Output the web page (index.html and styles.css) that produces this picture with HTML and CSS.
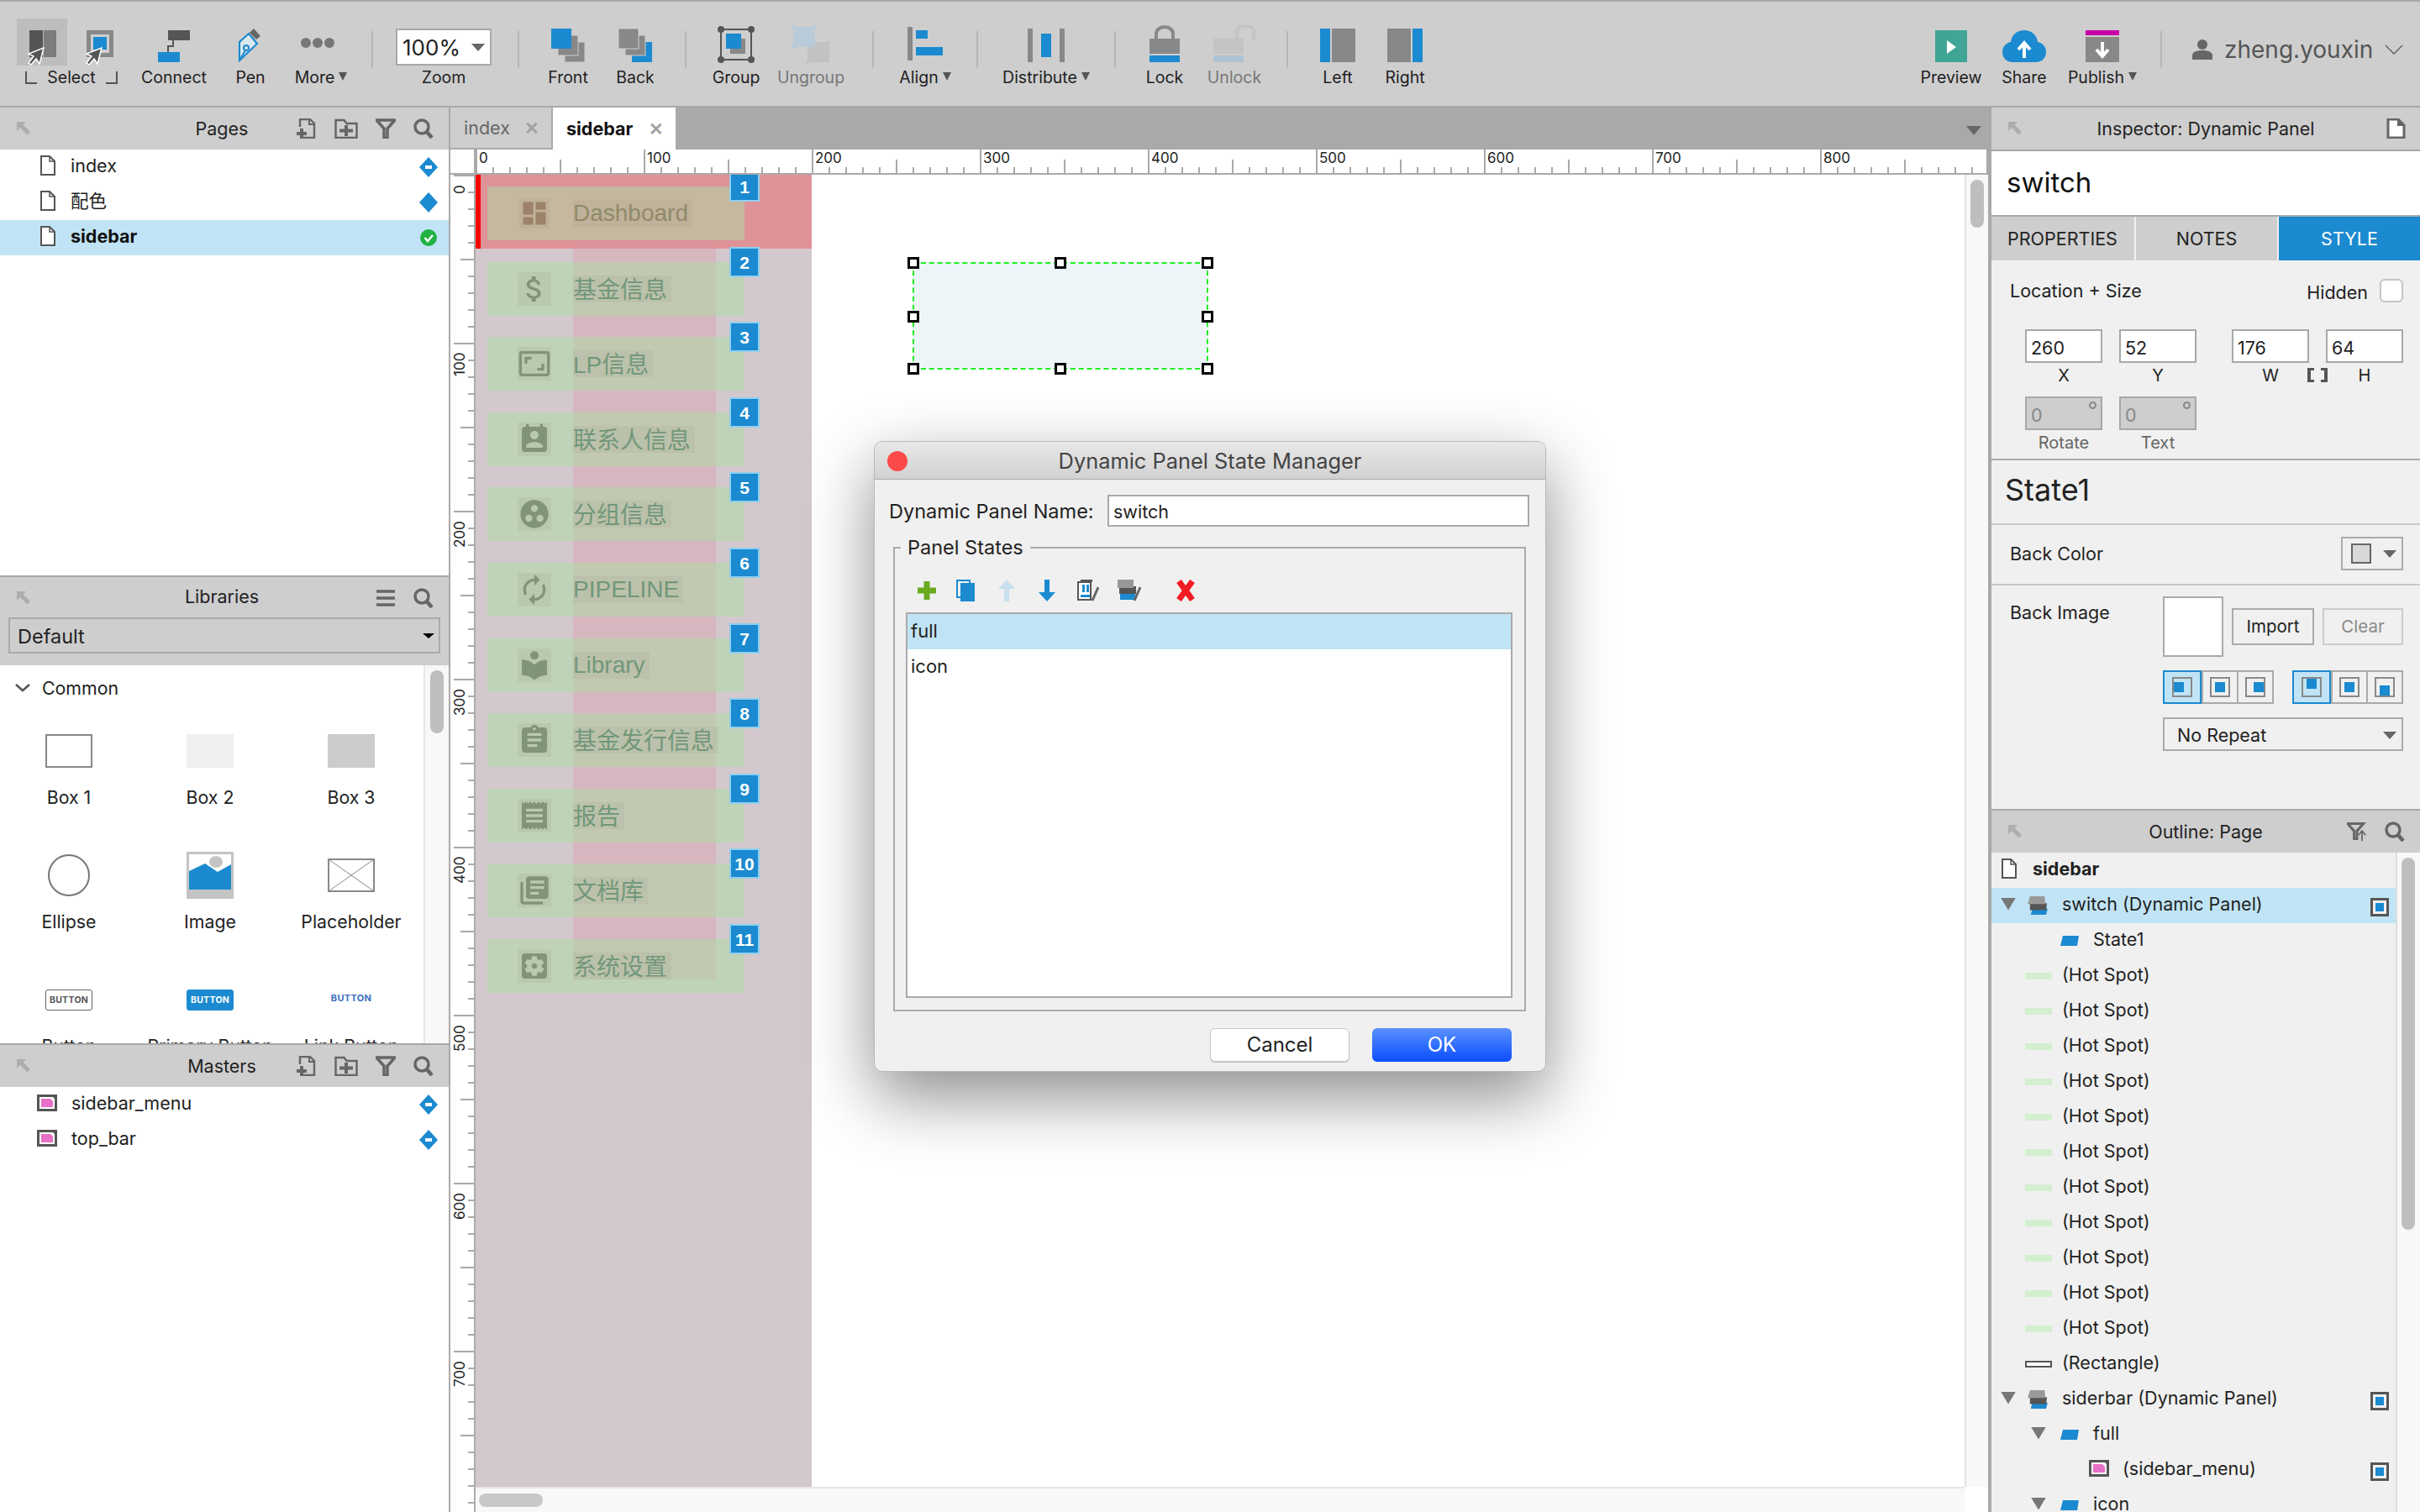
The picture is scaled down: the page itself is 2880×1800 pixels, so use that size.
FILE: index.html
```html
<!DOCTYPE html>
<html lang="en">
<head>
    <meta charset="UTF-8">
    <title>Axure - sidebar</title>
    <link rel="stylesheet" href="styles.css">
</head>
<body>

    <!-- shared icons -->
    <svg class="defs" width="0" height="0">
        <symbol id="i-collapse" viewBox="0 0 18 18"><path d="M1 1h11L8.500 4.500 17 13l-3.500 3.500L5 8 1 12z" fill="#adadad"/></symbol>
        <symbol id="i-newpage" viewBox="0 0 24 24"><path d="M4 10V1h12l5 5v17H8" fill="none" stroke="#666" stroke-width="2.400"/><path d="M15 1v6h6" fill="none" stroke="#666" stroke-width="2"/><path d="M0 18h12M6 12v12" stroke="#666" stroke-width="4"/></symbol>
        <symbol id="i-newfolder" viewBox="0 0 28 24"><path d="M1.500 23V2h10l3 4h12v17z" fill="none" stroke="#666" stroke-width="2.500"/><path d="M6 14.500h16M14 8v13" stroke="#666" stroke-width="4"/></symbol>
        <symbol id="i-filter" viewBox="0 0 24 24"><path d="M1 2h22l-9 10v11h-4V12z" fill="none" stroke="#666" stroke-width="3.500"/></symbol>
        <symbol id="i-search" viewBox="0 0 24 24"><circle cx="10" cy="10" r="8" fill="none" stroke="#666" stroke-width="3.500"/><path d="M15.500 15.500L22 23" stroke="#666" stroke-width="4.500"/></symbol>
        <symbol id="i-page" viewBox="0 0 18 24"><path d="M1 1h10l6 6v16H1z" fill="#fff" stroke="#555" stroke-width="2"/><path d="M11 1v6h6" fill="none" stroke="#555" stroke-width="1.500"/></symbol>
        <symbol id="i-master" viewBox="0 0 24 20"><rect x="1.500" y="1.500" width="21" height="17" fill="#fff" stroke="#555" stroke-width="3"/><path d="M5 5h11l3 3v7H5z" fill="#e86fc6"/><path d="M17 1h6v6z" fill="#555"/></symbol>
        <symbol id="i-dyn" viewBox="0 0 26 24"><path d="M6 16h20l-2 8H4z" fill="#1b8ad0"/><path d="M3 9h22l-1 9H3z" fill="#555"/><path d="M3 0h19l1 10H0z" fill="#999"/></symbol>
        <symbol id="i-state" viewBox="0 0 22 12"><path d="M3 0h19l-2 12H0z" fill="#1b8ad0"/></symbol>
        <symbol id="i-diamond" viewBox="0 0 22 24"><path d="M11 0l11 12-11 12L0 12z" fill="#1b8ad0"/></symbol>
        <symbol id="i-cursor" viewBox="0 0 22 22"><path d="M20 1l-5 19-4-6-6 7-3-2 6-8-6-3z" fill="#555" stroke="#fff" stroke-width="1.500"/></symbol>
    </svg>

    <!-- Top toolbar -->
    <header class="toolbar">
        <div class="tool">
            <div class="select-icons">
                <div class="select-on">
                    <svg class="ic-sel" viewBox="0 0 36 44"><rect x="3" y="0" width="16" height="32" fill="#555"/><rect x="20" y="0" width="15" height="32" fill="#7c7c7c"/><use href="#i-cursor" x="0" y="20" width="22" height="22"/></svg>
                </div>
                <div class="select-off">
                    <svg class="ic-sel" viewBox="0 0 36 44"><rect x="5.500" y="2.500" width="27" height="27" fill="#cecece" stroke="#888" stroke-width="5"/><rect x="11" y="8" width="16" height="15" fill="#1b8ad0"/><use href="#i-cursor" x="1" y="20" width="22" height="22"/></svg>
                </div>
            </div>
            <div class="select-label"><i class="brk-l"></i><span>Select</span><i class="brk-r"></i></div>
        </div>
        <div class="tool">
            <svg class="ic" width="40" height="46"><rect x="13" y="6" width="26" height="12" fill="#555"/><rect x="1" y="32" width="26" height="12" fill="#1b8ad0"/><path d="M19 18v7H13v7" fill="none" stroke="#555" stroke-width="2"/></svg>
            <span>Connect</span>
        </div>
        <div class="tool">
            <svg class="ic" width="30" height="46"><path d="M14 9l5-5 8 9-5 4z" fill="#666"/><path d="M2 42V20l11-10 10 12z" fill="#dde8ee" stroke="#1b8ad0" stroke-width="2.200"/><circle cx="10" cy="27" r="3" fill="none" stroke="#1b8ad0" stroke-width="2"/><path d="M2 42l7-12" stroke="#1b8ad0" stroke-width="2"/></svg>
            <span>Pen</span>
        </div>
        <div class="tool">
            <svg class="ic" width="48" height="46"><circle cx="6" cy="21" r="6" fill="#777"/><circle cx="20" cy="21" r="6" fill="#777"/><circle cx="34" cy="21" r="6" fill="#777"/></svg>
            <span>More<i class="drop"></i></span>
        </div>
        <i class="tsep"></i>
        <div class="tool">
            <div class="zoom-box"><span>100%</span><i class="caret"></i></div>
            <span>Zoom</span>
        </div>
        <i class="tsep"></i>
        <div class="tool">
            <svg class="ic" width="42" height="46"><rect x="17" y="20" width="24" height="24" fill="#888" stroke="#cecece"/><rect x="9" y="12" width="24" height="24" fill="#888" stroke="#cecece"/><rect x="1" y="4" width="24" height="24" fill="#1b8ad0"/></svg>
            <span>Front</span>
        </div>
        <div class="tool">
            <svg class="ic" width="42" height="46"><rect x="17" y="20" width="24" height="24" fill="#1b8ad0"/><rect x="9" y="12" width="24" height="24" fill="#888" stroke="#cecece"/><rect x="1" y="4" width="24" height="24" fill="#888" stroke="#cecece"/></svg>
            <span>Back</span>
        </div>
        <i class="tsep"></i>
        <div class="tool">
            <svg class="ic" width="46" height="46"><rect x="5" y="5" width="36" height="36" fill="none" stroke="#555" stroke-width="2"/><circle cx="5" cy="5" r="4" fill="#555"/><circle cx="41" cy="5" r="4" fill="#555"/><circle cx="5" cy="41" r="4" fill="#555"/><circle cx="41" cy="41" r="4" fill="#555"/><rect x="16" y="16" width="18" height="18" fill="#888"/><rect x="11" y="10" width="18" height="18" fill="#1b8ad0"/></svg>
            <span>Group</span>
        </div>
        <div class="tool dim">
            <svg class="ic" width="46" height="46"><rect x="19" y="20" width="26" height="24" fill="#c2c2c2"/><rect x="2" y="2" width="26" height="24" fill="#b9cbd8"/><circle cx="2" cy="2" r="2" fill="#b9cbd8"/><circle cx="28" cy="2" r="2" fill="#b9cbd8"/><circle cx="2" cy="26" r="2" fill="#b9cbd8"/><circle cx="45" cy="20" r="2" fill="#c2c2c2"/><circle cx="19" cy="44" r="2" fill="#c2c2c2"/></svg>
            <span>Ungroup</span>
        </div>
        <i class="tsep"></i>
        <div class="tool">
            <svg class="ic" width="42" height="46"><rect x="0" y="2" width="6" height="40" fill="#888"/><rect x="10" y="6" width="14" height="10" fill="#1b8ad0"/><rect x="10" y="26" width="32" height="10" fill="#1b8ad0"/></svg>
            <span>Align<i class="drop"></i></span>
        </div>
        <i class="tsep"></i>
        <div class="tool">
            <svg class="ic" width="44" height="46"><rect x="0" y="4" width="6" height="40" fill="#888"/><rect x="38" y="4" width="6" height="40" fill="#888"/><rect x="16" y="10" width="12" height="28" fill="#1b8ad0"/></svg>
            <span>Distribute<i class="drop"></i></span>
        </div>
        <i class="tsep"></i>
        <div class="tool">
            <svg class="ic" width="36" height="46"><path d="M8 17V10a10 8 0 0 1 20 0v7" fill="none" stroke="#888" stroke-width="4"/><rect x="0" y="16" width="36" height="18" fill="#888"/><rect x="0" y="36" width="36" height="8" fill="#1b8ad0"/></svg>
            <span>Lock</span>
        </div>
        <div class="tool dim">
            <svg class="ic" width="50" height="46"><path d="M28 17V8a9 7 0 0 1 20 0v10" fill="none" stroke="#c4c4c4" stroke-width="4"/><rect x="0" y="16" width="36" height="18" fill="#c4c4c4"/><rect x="0" y="36" width="36" height="8" fill="#aec4d4"/></svg>
            <span>Unlock</span>
        </div>
        <i class="tsep"></i>
        <div class="tool">
            <svg class="ic" width="42" height="46"><rect x="0" y="4" width="12" height="40" fill="#1b8ad0"/><rect x="14" y="4" width="28" height="40" fill="#888"/></svg>
            <span>Left</span>
        </div>
        <div class="tool">
            <svg class="ic" width="42" height="46"><rect x="0" y="4" width="28" height="40" fill="#888"/><rect x="30" y="4" width="12" height="40" fill="#1b8ad0"/></svg>
            <span>Right</span>
        </div>
        <div></div>
        <div class="tool">
            <svg class="ic" width="38" height="46"><rect x="0" y="6" width="38" height="38" fill="#40a595"/><path d="M14 18l11 8-11 8z" fill="#fff"/></svg>
            <span>Preview</span>
        </div>
        <div class="tool">
            <svg class="ic" width="52" height="46"><path d="M12 44C5 44 0 39 0 32c0-6 4-11 10-12C11 11 18 6 26 6s15 5 16 14c6 1 10 6 10 12 0 7-5 12-12 12z" fill="#1b8ad0"/><path d="M26 39V22M19 29l7-8 7 8" fill="none" stroke="#fff" stroke-width="4"/></svg>
            <span>Share</span>
        </div>
        <div class="tool">
            <svg class="ic" width="40" height="46"><rect x="0" y="6" width="40" height="6" fill="#c800a8"/><rect x="0" y="14" width="40" height="30" fill="#888"/><path d="M20 20v17M13 29l7 8 7-8" fill="none" stroke="#fff" stroke-width="4"/></svg>
            <span>Publish<i class="drop"></i></span>
        </div>
        <i class="tsep"></i>
        <div class="user">
            <svg width="24" height="24"><circle cx="12" cy="6" r="6" fill="#666"/><path d="M0 24v-5c0-4 5-6 12-6s12 2 12 6v5z" fill="#666"/></svg>
            <span>zheng.youxin</span>
            <svg width="22" height="12"><path d="M1 1l10 10L21 1" fill="none" stroke="#666" stroke-width="1.500"/></svg>
        </div>
    </header>

    <div class="main">

        <!-- Left column -->
        <aside class="left">
            <section class="pages">
                <div class="phead">
                    <svg class="collapse"><use href="#i-collapse"/></svg>
                    <span class="ptitle">Pages</span>
                    <div class="pactions">
                        <svg class="pa"><use href="#i-newpage"/></svg>
                        <svg class="pa wide"><use href="#i-newfolder"/></svg>
                        <svg class="pa"><use href="#i-filter"/></svg>
                        <svg class="pa"><use href="#i-search"/></svg>
                    </div>
                </div>
                <div class="plist">
                    <div class="prow"><svg class="pg"><use href="#i-page"/></svg><span>index</span><svg class="dia"><use href="#i-diamond"/><rect x="7" y="10" width="8" height="4" fill="#fff"/></svg></div>
                    <div class="prow"><svg class="pg"><use href="#i-page"/></svg><span class="zh-name">配色</span><svg class="dia"><use href="#i-diamond"/></svg></div>
                    <div class="prow on"><svg class="pg"><use href="#i-page"/></svg><span>sidebar</span><svg class="dia" viewBox="0 0 22 24"><circle cx="11" cy="12" r="10" fill="#1fb141"/><path d="M6.500 12l3.500 4 6-7" fill="none" stroke="#fff" stroke-width="2.500"/></svg></div>
                </div>
            </section>

            <section class="libs">
                <div class="phead">
                    <svg class="collapse"><use href="#i-collapse"/></svg>
                    <span class="ptitle">Libraries</span>
                    <div class="pactions">
                        <svg class="pa" viewBox="0 0 24 24"><path d="M1 4h22M1 12h22M1 20h22" stroke="#666" stroke-width="3.500"/></svg>
                        <svg class="pa"><use href="#i-search"/></svg>
                    </div>
                </div>
                <div class="lib-select"><span>Default</span><i class="caret dark"></i></div>
                <div class="lib-body">
                    <div class="lib-items">
                        <div class="lib-head">
                            <svg width="18" height="10"><path d="M1 1l8 7 8-7" fill="none" stroke="#555" stroke-width="2.500"/></svg>
                            <span>Common</span>
                        </div>
                        <div class="lib-grid">
                            <div class="widget"><div class="wicon"><i class="box1"></i></div><span>Box 1</span></div>
                            <div class="widget"><div class="wicon"><i class="box2"></i></div><span>Box 2</span></div>
                            <div class="widget"><div class="wicon"><i class="box3"></i></div><span>Box 3</span></div>
                            <div class="widget"><div class="wicon"><i class="ell"></i></div><span>Ellipse</span></div>
                            <div class="widget"><div class="wicon">
                                <svg width="56" height="56"><rect width="56" height="56" fill="#c4c4c4"/><rect x="3" y="3" width="50" height="42" fill="#fff"/><path d="M3 23l19-9 15 10 16-9v30H3z" fill="#1b8ad0"/><ellipse cx="35" cy="12" rx="8" ry="7" fill="#c4c4c4"/></svg>
                            </div><span>Image</span></div>
                            <div class="widget"><div class="wicon">
                                <svg width="56" height="40"><rect x="1" y="1" width="54" height="38" fill="#fff" stroke="#888" stroke-width="2"/><path d="M1 1l54 38M55 1L1 39" stroke="#888"/></svg>
                            </div><span>Placeholder</span></div>
                            <div class="widget"><div class="wicon"><b class="wbtn">BUTTON</b></div><span>Button</span></div>
                            <div class="widget"><div class="wicon"><b class="wbtn primary">BUTTON</b></div><span>Primary Button</span></div>
                            <div class="widget"><div class="wicon"><b class="wbtn link">BUTTON</b></div><span>Link Button</span></div>
                        </div>
                    </div>
                    <div class="lib-scroll"><i></i></div>
                </div>
            </section>

            <section class="masters">
                <div class="phead">
                    <svg class="collapse"><use href="#i-collapse"/></svg>
                    <span class="ptitle">Masters</span>
                    <div class="pactions">
                        <svg class="pa"><use href="#i-newpage"/></svg>
                        <svg class="pa wide"><use href="#i-newfolder"/></svg>
                        <svg class="pa"><use href="#i-filter"/></svg>
                        <svg class="pa"><use href="#i-search"/></svg>
                    </div>
                </div>
                <div class="plist">
                    <div class="prow"><svg class="mst"><use href="#i-master"/></svg><span>sidebar_menu</span><svg class="dia"><use href="#i-diamond"/><rect x="7" y="10" width="8" height="4" fill="#fff"/></svg></div>
                    <div class="prow"><svg class="mst"><use href="#i-master"/></svg><span>top_bar</span><svg class="dia"><use href="#i-diamond"/><rect x="7" y="10" width="8" height="4" fill="#fff"/></svg></div>
                </div>
            </section>
        </aside>

        <!-- Middle column -->
        <main class="center">
            <div class="tabs">
                <div class="tab">index<i>✕</i></div>
                <div class="tab on">sidebar<i>✕</i></div>
                <i class="tabs-menu"></i>
            </div>
            <div class="work">
                <div class="corner"></div>
                <div class="hruler">
                    <span>0</span><span>100</span><span>200</span><span>300</span><span>400</span>
                    <span>500</span><span>600</span><span>700</span><span>800</span>
                </div>
                <div class="vruler">
                    <span>0</span><span>100</span><span>200</span><span>300</span><span>400</span>
                    <span>500</span><span>600</span><span>700</span>
                </div>
                <div class="canvas">
                    <div class="nav">
                        <div class="nav-sel"></div>
                        <div class="nav-col"></div>
                        <div class="nav-row first">
                            <svg class="nic small" viewBox="0 0 24 24"><path d="M3 13h8V3H3v10zm0 8h8v-6H3v6zm10 0h8V11h-8v10zm0-18v6h8V3h-8z"/></svg>
                            <span class="ntx en">Dashboard</span><b class="badge">1</b>
                        </div>
                        <div class="nav-row">
                            <svg class="nic" viewBox="0 0 24 24"><path d="M11.800 10.900c-2.270-.590-3-1.200-3-2.150 0-1.090 1.010-1.850 2.700-1.850 1.780 0 2.440.850 2.500 2.100h2.210c-.070-1.720-1.120-3.300-3.210-3.810V3h-3v2.160c-1.940.420-3.500 1.680-3.500 3.610 0 2.310 1.910 3.460 4.700 4.130 2.500.600 3 1.480 3 2.410 0 .690-.490 1.790-2.700 1.790-2.060 0-2.870-.920-2.980-2.100h-2.200c.120 2.190 1.760 3.420 3.680 3.830V21h3v-2.150c1.950-.370 3.500-1.500 3.500-3.550 0-2.840-2.430-3.810-4.700-4.400z"/></svg>
                            <span class="ntx">基金信息</span><b class="badge">2</b>
                        </div>
                        <div class="nav-row">
                            <svg class="nic" viewBox="0 0 24 24"><path d="M19 12h-2v3h-3v2h5v-5zM7 9h3V7H5v5h2V9zm14-6H3c-1.100 0-2 .900-2 2v14c0 1.100.900 2 2 2h18c1.100 0 2-.900 2-2V5c0-1.100-.900-2-2-2zm0 16.010H3V4.990h18v14.020z"/></svg>
                            <span class="ntx">LP信息</span><b class="badge">3</b>
                        </div>
                        <div class="nav-row">
                            <svg class="nic" viewBox="0 0 24 24"><path d="M19 3h-1V1h-2v2H8V1H6v2H5c-1.110 0-2 .900-2 2v14c0 1.100.890 2 2 2h14c1.100 0 2-.900 2-2V5c0-1.100-.900-2-2-2zm-7 3c1.660 0 3 1.340 3 3s-1.340 3-3 3-3-1.340-3-3 1.340-3 3-3zm6 12H6v-1c0-2 4-3.100 6-3.100s6 1.100 6 3.100v1z"/></svg>
                            <span class="ntx">联系人信息</span><b class="badge">4</b>
                        </div>
                        <div class="nav-row">
                            <svg class="nic" viewBox="0 0 24 24"><path d="M12 2C6.480 2 2 6.480 2 12s4.480 10 10 10 10-4.480 10-10S17.520 2 12 2zM8 17.500c-1.380 0-2.500-1.120-2.500-2.500s1.120-2.500 2.500-2.500 2.500 1.120 2.500 2.500-1.120 2.500-2.500 2.500zM9.500 8c0-1.380 1.120-2.500 2.500-2.500s2.500 1.120 2.500 2.500-1.120 2.500-2.500 2.500S9.500 9.380 9.500 8zm6.500 9.500c-1.380 0-2.500-1.120-2.500-2.500s1.120-2.500 2.500-2.500 2.500 1.120 2.500 2.500-1.120 2.500-2.500 2.500z"/></svg>
                            <span class="ntx">分组信息</span><b class="badge">5</b>
                        </div>
                        <div class="nav-row">
                            <svg class="nic" viewBox="0 0 24 24"><path d="M12 6v3l4-4-4-4v3c-4.420 0-8 3.580-8 8 0 1.570.460 3.030 1.240 4.260L6.700 14.800c-.450-.830-.700-1.790-.700-2.800 0-3.310 2.690-6 6-6zm6.760 1.740L17.300 9.200c.440.840.700 1.790.700 2.800 0 3.310-2.690 6-6 6v-3l-4 4 4 4v-3c4.420 0 8-3.580 8-8 0-1.570-.460-3.030-1.240-4.260z"/></svg>
                            <span class="ntx en">PIPELINE</span><b class="badge">6</b>
                        </div>
                        <div class="nav-row">
                            <svg class="nic" viewBox="0 0 24 24"><path d="M12 11.550C9.640 9.350 6.480 8 3 8v11c3.480 0 6.640 1.350 9 3.550 2.360-2.190 5.520-3.550 9-3.550V8c-3.480 0-6.640 1.350-9 3.550zM12 8c1.660 0 3-1.340 3-3s-1.340-3-3-3-3 1.340-3 3 1.340 3 3 3z"/></svg>
                            <span class="ntx en">Library</span><b class="badge">7</b>
                        </div>
                        <div class="nav-row">
                            <svg class="nic" viewBox="0 0 24 24"><path d="M19 3h-4.180C14.400 1.840 13.300 1 12 1c-1.300 0-2.400.840-2.820 2H5c-1.100 0-2 .900-2 2v14c0 1.100.900 2 2 2h14c1.100 0 2-.900 2-2V5c0-1.100-.900-2-2-2zm-7 0c.550 0 1 .450 1 1s-.450 1-1 1-1-.450-1-1 .450-1 1-1zm2 14H7v-2h7v2zm3-4H7v-2h10v2zm0-4H7V7h10v2z"/></svg>
                            <span class="ntx">基金发行信息</span><b class="badge">8</b>
                        </div>
                        <div class="nav-row">
                            <svg class="nic" viewBox="0 0 24 24"><path d="M18 17H6v-2h12v2zm0-4H6v-2h12v2zm0-4H6V7h12v2zM3 22l1.500-1.500L6 22l1.500-1.500L9 22l1.500-1.500L12 22l1.500-1.500L15 22l1.500-1.500L18 22l1.500-1.500L21 22V2l-1.500 1.500L18 2l-1.500 1.500L15 2l-1.500 1.500L12 2l-1.500 1.500L9 2 7.500 3.500 6 2 4.500 3.500 3 2v20z"/></svg>
                            <span class="ntx">报告</span><b class="badge">9</b>
                        </div>
                        <div class="nav-row">
                            <svg class="nic" viewBox="0 0 24 24"><path d="M4 6H2v14c0 1.100.900 2 2 2h14v-2H4V6zm16-4H8c-1.100 0-2 .900-2 2v12c0 1.100.900 2 2 2h12c1.100 0 2-.900 2-2V4c0-1.100-.900-2-2-2zm-1 9H9V9h10v2zm-4 4H9v-2h6v2zm4-8H9V5h10v2z"/></svg>
                            <span class="ntx">文档库</span><b class="badge">10</b>
                        </div>
                        <div class="nav-row">
                            <svg class="nic" viewBox="0 0 24 24"><path d="M12 10c-1.100 0-2 .900-2 2s.900 2 2 2 2-.900 2-2-.900-2-2-2zm7-7H5c-1.110 0-2 .900-2 2v14c0 1.100.890 2 2 2h14c1.110 0 2-.900 2-2V5c0-1.100-.890-2-2-2zm-1.750 9c0 .230-.020.460-.050.680l1.480 1.160c.130.110.170.300.080.450l-1.400 2.420c-.090.150-.270.210-.430.150l-1.740-.700c-.360.280-.760.510-1.180.690l-.260 1.850c-.030.170-.180.300-.350.300h-2.800c-.170 0-.320-.130-.350-.290l-.260-1.850c-.430-.180-.820-.410-1.180-.690l-1.740.700c-.160.060-.340 0-.430-.150l-1.400-2.420c-.090-.150-.050-.340.080-.450l1.480-1.160c-.030-.230-.050-.460-.050-.690 0-.230.020-.460.050-.680l-1.480-1.160c-.130-.110-.170-.300-.080-.450l1.400-2.420c.090-.150.270-.210.430-.150l1.740.700c.360-.280.760-.510 1.180-.690l.260-1.850c.030-.170.180-.300.350-.300h2.800c.170 0 .320.130.350.290l.260 1.850c.430.180.820.410 1.180.690l1.740-.700c.160-.060.340 0 .430.150l1.400 2.420c.090.150.050.340-.080.450l-1.480 1.160c.030.230.050.460.050.690z"/></svg>
                            <span class="ntx">系统设置</span><b class="badge">11</b>
                        </div>
                    </div>

                    <div class="panel-sel">
                        <i class="hd tl"></i><i class="hd tc"></i><i class="hd tr"></i>
                        <i class="hd ml"></i><i class="hd mr"></i>
                        <i class="hd bl"></i><i class="hd bc"></i><i class="hd br"></i>
                    </div>
                </div>
                <div class="vscroll"><i></i></div>
                <div class="hscroll"><i></i></div>
                <div class="scroll-corner"></div>
            </div>
        </main>

        <!-- Right column -->
        <aside class="right">
            <div class="phead ins-head">
                <svg class="collapse"><use href="#i-collapse"/></svg>
                <span class="ptitle">Inspector: Dynamic Panel</span>
                <div class="pactions">
                    <svg class="pa" viewBox="0 0 24 24"><path d="M3 1h12l7 7v15H3z" fill="#fff" stroke="#666" stroke-width="3"/><path d="M14 1v8h8z" fill="#666"/></svg>
                </div>
            </div>
            <div class="ins-name">switch</div>
            <div class="ins-tabs">
                <div class="itab">PROPERTIES</div>
                <div class="itab">NOTES</div>
                <div class="itab on">STYLE</div>
            </div>

            <section class="loc">
                <div class="loc-head">
                    <span>Location + Size</span>
                    <label class="hidden-opt">Hidden<i class="check"></i></label>
                </div>
                <div class="loc-grid">
                    <div class="fld"><div class="num">260</div><span>X</span></div>
                    <div class="fld"><div class="num">52</div><span>Y</span></div>
                    <div class="fld"><div class="num">176</div><span>W</span><i class="ratio"></i></div>
                    <div class="fld"><div class="num">64</div><span>H</span></div>
                    <div class="fld off"><div class="num">0<i class="deg"></i></div><span>Rotate</span></div>
                    <div class="fld off"><div class="num">0<i class="deg"></i></div><span>Text</span></div>
                </div>
            </section>

            <section class="state-name">State1</section>

            <section class="back-color">
                <span>Back Color</span>
                <div class="swatch-btn"><i class="swatch"></i><i class="caret"></i></div>
            </section>

            <section class="back-image">
                <span class="bi-label">Back Image</span>
                <div class="bi-ctrls">
                    <div class="bi-top">
                        <div class="bi-thumb"></div>
                        <div class="bi-btn">Import</div>
                        <div class="bi-btn off">Clear</div>
                    </div>
                    <div class="bi-aligns">
                        <div class="al-group">
                            <div class="al on"><div class="al-box ml"><i></i></div></div>
                            <div class="al"><div class="al-box"><i></i></div></div>
                            <div class="al"><div class="al-box mr"><i></i></div></div>
                        </div>
                        <div class="al-group">
                            <div class="al on"><div class="al-box mt"><i></i></div></div>
                            <div class="al"><div class="al-box"><i></i></div></div>
                            <div class="al"><div class="al-box mb"><i></i></div></div>
                        </div>
                    </div>
                    <div class="bi-select"><span>No Repeat</span><i class="caret"></i></div>
                </div>
            </section>

            <section class="outline">
                <div class="phead">
                    <svg class="collapse"><use href="#i-collapse"/></svg>
                    <span class="ptitle">Outline: Page</span>
                    <div class="pactions">
                        <svg class="pa filterup" viewBox="0 0 28 26"><path d="M1 2h22l-9 10v11h-4V12z" fill="none" stroke="#666" stroke-width="3.500"/><path d="M21 26V13M16 18l5-6 5 6" fill="none" stroke="#666" stroke-width="2"/></svg>
                        <svg class="pa"><use href="#i-search"/></svg>
                    </div>
                </div>
                <div class="o-body">
                    <div class="o-list">
                        <div class="o-row o-page"><svg class="pg"><use href="#i-page"/></svg><b>sidebar</b></div>
                        <div class="o-row o-top on"><i class="tri"></i><svg class="dyn"><use href="#i-dyn"/></svg><span>switch (Dynamic Panel)</span><i class="flag"></i></div>
                        <div class="o-row o-state"><svg class="st"><use href="#i-state"/></svg><span>State1</span></div>
                        <div class="o-row o-leaf"><i class="hot"></i><span>(Hot Spot)</span></div>
                        <div class="o-row o-leaf"><i class="hot"></i><span>(Hot Spot)</span></div>
                        <div class="o-row o-leaf"><i class="hot"></i><span>(Hot Spot)</span></div>
                        <div class="o-row o-leaf"><i class="hot"></i><span>(Hot Spot)</span></div>
                        <div class="o-row o-leaf"><i class="hot"></i><span>(Hot Spot)</span></div>
                        <div class="o-row o-leaf"><i class="hot"></i><span>(Hot Spot)</span></div>
                        <div class="o-row o-leaf"><i class="hot"></i><span>(Hot Spot)</span></div>
                        <div class="o-row o-leaf"><i class="hot"></i><span>(Hot Spot)</span></div>
                        <div class="o-row o-leaf"><i class="hot"></i><span>(Hot Spot)</span></div>
                        <div class="o-row o-leaf"><i class="hot"></i><span>(Hot Spot)</span></div>
                        <div class="o-row o-leaf"><i class="hot"></i><span>(Hot Spot)</span></div>
                        <div class="o-row o-leaf"><i class="rect"></i><span>(Rectangle)</span></div>
                        <div class="o-row o-top"><i class="tri"></i><svg class="dyn"><use href="#i-dyn"/></svg><span>siderbar (Dynamic Panel)</span><i class="flag"></i></div>
                        <div class="o-row o-sub"><i class="tri"></i><svg class="st"><use href="#i-state"/></svg><span>full</span></div>
                        <div class="o-row o-deep"><svg class="mst"><use href="#i-master"/></svg><span>(sidebar_menu)</span><i class="flag"></i></div>
                        <div class="o-row o-sub"><i class="tri"></i><svg class="st"><use href="#i-state"/></svg><span>icon</span></div>
                    </div>
                    <div class="o-scroll"><i></i></div>
                </div>
            </section>
        </aside>
    </div>

    <!-- Modal -->
    <div class="dialog">
        <div class="dlg-title"><i class="dlg-close"></i>Dynamic Panel State Manager</div>
        <div class="dlg-name">
            <span>Dynamic Panel Name:</span>
            <div class="dlg-input">switch</div>
        </div>
        <fieldset class="dlg-states">
            <legend>Panel States</legend>
            <div class="dlg-tools">
                <svg width="22" height="26"><path d="M11 2v22M0 13h22" stroke="#6aab1f" stroke-width="7"/></svg>
                <svg width="22" height="26"><rect x="1" y="1" width="15" height="20" fill="#f0f0f0" stroke="#1b8ad0" stroke-width="2"/><rect x="5" y="4" width="17" height="22" fill="#1b8ad0"/></svg>
                <svg class="t-up" width="20" height="26"><path d="M10 0l10 11h-7v15H7V11H0z" fill="#c8dfee"/></svg>
                <svg class="t-down" width="20" height="26"><path d="M10 26L0 15h7V0h6v15h7z" fill="#1b8ad0"/></svg>
                <svg class="t-edit" width="26" height="26"><path d="M1 3h15v21H1z" fill="#fff" stroke="#555" stroke-width="2"/><path d="M4 0h14v3H4z" fill="#555"/><rect x="6" y="6" width="3" height="9" fill="#1b8ad0"/><rect x="11" y="6" width="3" height="9" fill="#1b8ad0"/><rect x="4" y="18" width="11" height="3" fill="#1b8ad0"/><path d="M25 9l-7 16" stroke="#666" stroke-width="3"/></svg>
                <svg class="t-edit2" width="28" height="26"><rect x="3" y="15" width="18" height="9" fill="#1b8ad0"/><rect x="2" y="8" width="20" height="9" fill="#555"/><rect x="0" y="0" width="19" height="10" fill="#999"/><path d="M27 9l-7 16" stroke="#666" stroke-width="3"/></svg>
                <svg class="t-del" width="22" height="26"><path d="M3 2l16 22M19 2L3 24" stroke="#f31c24" stroke-width="7"/></svg>
            </div>
            <div class="dlg-list">
                <div class="dlg-item on">full</div>
                <div class="dlg-item">icon</div>
            </div>
        </fieldset>
        <div class="dlg-btns">
            <div class="btn-cancel">Cancel</div>
            <div class="btn-ok">OK</div>
        </div>
    </div>

</body>
</html>
```

FILE: styles.css
```css
* {
    box-sizing: border-box;
}
html, body {
    margin: 0;
    height: 100%;
}
body {
    width: 2880px;
    height: 1800px;
    overflow: hidden;
    display: flex;
    flex-direction: column;
    position: relative;
    background: #fff;
    color: #222;
    font-family: Inter, "Noto Sans CJK SC", sans-serif;
    font-size: 21.500px;
}
i {
    font-style: normal;
}
.defs {
    position: absolute;
}

/* ---------- toolbar ---------- */
.toolbar {
    height: 126px;
    flex: none;
    border-top: 2px solid #a8a8a8;
    background: #cecece;
    padding: 28px 0 0 20px;
    display: grid;
    grid-template-columns: 125px 124px 58px 110px 12px 158px 20px 98px 62px 58px 62px 116px 32px 92px 32px 132px 32px 86px 80px 46px 74px 86px 1fr 84px 90px 96px 44px 286px;
    align-items: start;
    font-size: 19.500px;
}
.tool {
    display: flex;
    flex-direction: column;
    align-items: center;
    white-space: nowrap;
}
.tool > span, .select-label {
    height: 24px;
    line-height: 24px;
    margin-top: 4px;
}
.tool.dim > span {
    color: #777;
}
.ic {
    display: block;
}
.tsep {
    justify-self: center;
    width: 2px;
    height: 44px;
    margin-top: 7px;
    background: #b6b6b6;
}
.drop {
    display: inline-block;
    margin-left: 5px;
    vertical-align: 3px;
    border-left: 5px solid transparent;
    border-right: 5px solid transparent;
    border-top: 10px solid #555;
}
.caret {
    border-left: 8px solid transparent;
    border-right: 8px solid transparent;
    border-top: 9px solid #666;
}
.caret.dark {
    border-top-color: #000;
    border-left-width: 7px;
    border-right-width: 7px;
    border-top-width: 6px;
}

.select-icons {
    display: flex;
    align-self: flex-start;
    margin-top: -8px;
    height: 54px;
}
.select-on, .select-off {
    width: 60px;
    height: 56px;
    padding: 14px 0 0 12px;
}
.select-on {
    background: #bdbdbd;
}
.select-off {
    padding-left: 20px;
}
.ic-sel {
    display: block;
    width: 36px;
    height: 44px;
}
.select-label {
    display: flex;
    align-items: center;
    align-self: flex-start;
    width: 120px;
    justify-content: space-between;
    padding-left: 10px;
}
.brk-l, .brk-r {
    width: 14px;
    height: 15px;
    border-bottom: 2px solid #555;
}
.brk-l {
    border-left: 2px solid #555;
}
.brk-r {
    border-right: 2px solid #555;
}
.zoom-box {
    width: 114px;
    height: 44px;
    margin: 4px 0 -2px;
    background: #fff;
    border: 2px solid #a8a8a8;
    display: flex;
    align-items: center;
    justify-content: space-between;
    padding: 0 6px 0 6px;
    font-size: 26px;
    color: #222;
}
.user {
    display: flex;
    align-items: center;
    gap: 14px;
    padding: 12px 0 0 15px;
    font-size: 28px;
    color: #555;
    white-space: nowrap;
}

/* ---------- columns ---------- */
.main {
    flex: 1;
    display: flex;
    min-height: 0;
}
.left {
    width: 536px;
    flex: none;
    display: flex;
    flex-direction: column;
    border-right: 2px solid #aaa;
}
.center {
    flex: 1;
    min-width: 0;
    display: flex;
    flex-direction: column;
}
.right {
    width: 512px;
    flex: none;
    display: flex;
    flex-direction: column;
    border-left: 2px solid #a8a8a8;
    background: #f0f0f0;
}

/* ---------- panel header ---------- */
.phead {
    height: 52px;
    flex: none;
    position: relative;
    background: #cecece;
    border-top: 2px solid #a8a8a8;
    display: flex;
    align-items: center;
    justify-content: center;
    font-size: 21.500px;
}
.left .phead {
    padding-right: 6px;
}
.ptitle {
    color: #222;
}
.collapse {
    position: absolute;
    left: 19px;
    top: 16px;
    width: 18px;
    height: 18px;
}
.pactions {
    position: absolute;
    right: 18px;
    top: 13px;
    display: flex;
    gap: 21px;
}
.pa {
    width: 24px;
    height: 24px;
    display: block;
}
.pa.wide {
    width: 28px;
}

/* ---------- pages ---------- */
.pages {
    height: 559px;
    flex: none;
}
.plist {
    background: #fff;
}
.prow {
    height: 42px;
    display: flex;
    align-items: center;
    padding: 0 0 4px 48px;
}
.prow.on {
    background: #c0e4f5;
    font-weight: 700;
    color: #111;
}
.zh-name {
    margin-top: -3px;
}
.pg {
    width: 18px;
    height: 24px;
    flex: none;
    margin-right: 18px;
}
.mst {
    width: 24px;
    height: 20px;
    flex: none;
    margin: 0 17px 0 -4px;
}
.dia {
    width: 22px;
    height: 24px;
    margin: 4px 13px 0 auto;
}

/* ---------- libraries ---------- */
.libs {
    height: 557px;
    flex: none;
    display: flex;
    flex-direction: column;
    overflow: hidden;
}
.libs .phead {
    height: 50px;
    padding-bottom: 2px;
}
.lib-select {
    height: 57px;
    flex: none;
    background: #cecece;
    padding: 0 10px 13px;
    display: flex;
    position: relative;
    align-items: center;
    justify-content: space-between;
    font-size: 23.500px;
}
.lib-select span {
    border: 2px solid #aaa;
    position: absolute;
    left: 10px;
    right: 10px;
    top: 0;
    height: 43px;
    line-height: 42px;
    padding-left: 9px;
}
.lib-select .caret {
    position: absolute;
    right: 17px;
    top: 19px;
}
.lib-body {
    flex: 1;
    display: flex;
    min-height: 0;
    background: #fff;
}
.lib-items {
    flex: 1;
    overflow: hidden;
}
.lib-head {
    height: 54px;
    display: flex;
    align-items: center;
    padding-left: 18px;
    gap: 14px;
    font-size: 21.300px;
    margin-bottom: 18px;
}
.lib-grid {
    display: grid;
    grid-template-columns: repeat(3, 168px);
    margin-left: -2px;
}
.widget {
    height: 148px;
    display: flex;
    flex-direction: column;
    align-items: center;
    font-size: 21.300px;
    white-space: nowrap;
}
.wicon {
    height: 60px;
    margin-bottom: 12px;
    display: flex;
    align-items: center;
    justify-content: center;
}
.box1, .box2, .box3 {
    width: 56px;
    height: 40px;
}
.box1 {
    background: #fff;
    border: 2px solid #888;
}
.box2 {
    background: #f0f0f0;
}
.box3 {
    background: #cccccc;
}
.ell {
    width: 50px;
    height: 50px;
    border: 2px solid #777;
    border-radius: 50%;
}
.wbtn {
    width: 56px;
    height: 25px;
    line-height: 23px;
    text-align: center;
    font-size: 10.500px;
    letter-spacing: .3px;
    color: #555;
    border: 1px solid #666;
    border-radius: 3px;
}
.wbtn.primary {
    background: #1b8ad0;
    border-color: #1b8ad0;
    color: #fff;
}
.wbtn.link {
    border: none;
    color: #3a70c0;
    line-height: 21px;
    font-size: 11px;
}
.lib-scroll {
    width: 30px;
    flex: none;
    background: #f8f8f8;
    border-left: 2px solid #e6e6e6;
    padding: 6px 6px 0 6px;
}
.lib-scroll i, .o-scroll i, .vscroll i {
    display: block;
    width: 16px;
    height: 75px;
    border-radius: 8px;
    background: #bebebe;
}
.masters {
    flex: 1;
    background: #fff;
}

/* ---------- tabs + work area ---------- */
.tabs {
    height: 52px;
    flex: none;
    background: #a9a9a9;
    display: flex;
    position: relative;
    padding-top: 2px;
}
.tab {
    width: 122px;
    height: 50px;
    background: #cecece;
    border-right: 2px solid #aaa;
    border-bottom: 2px solid #aaa;
    display: flex;
    align-items: center;
    justify-content: space-between;
    padding: 0 14px 0 16px;
    color: #666;
}
.tab i {
    color: #a2a2a2;
    font-size: 21px;
    font-weight: 700;
}
.tab.on {
    width: 146px;
    background: #fff;
    border: none;
    height: 50px;
    color: #111;
    font-weight: 700;
}
.tabs-menu {
    position: absolute;
    right: 10px;
    top: 24px;
    border-left: 9px solid transparent;
    border-right: 9px solid transparent;
    border-top: 11px solid #666;
}
.work {
    flex: 1;
    min-height: 0;
    display: grid;
    grid-template-columns: 30px 1fr 30px;
    grid-template-rows: 30px 1fr 30px;
    background: #fff;
}
.corner {
    border-bottom: 2px solid #aaa;
    border-right: 2px solid #aaa;
}
.hruler {
    grid-column: 2 / 4;
    display: flex;
    overflow: hidden;
    border-bottom: 2px solid #aaa;
    border-right: 4px solid #aaa;
    background-image:
        linear-gradient(to right, #aaa 2px, transparent 2px),
        linear-gradient(to right, #aaa 2px, transparent 2px),
        linear-gradient(to right, #aaa 2px, transparent 2px);
    background-size: 200px 28px, 100px 16px, 20px 7px;
    background-position: left bottom;
    background-repeat: repeat-x;
    font-size: 17px;
}
.hruler span {
    flex: 0 0 200px;
    padding-left: 4px;
    line-height: 20px;
}
.vruler {
    grid-row: 2 / 4;
    display: flex;
    flex-direction: column;
    overflow: hidden;
    border-right: 2px solid #aaa;
    background-image:
        linear-gradient(to bottom, #aaa 2px, transparent 2px),
        linear-gradient(to bottom, #aaa 2px, transparent 2px),
        linear-gradient(to bottom, #aaa 2px, transparent 2px);
    background-size: 24px 200px, 16px 100px, 7px 20px;
    background-position: right top;
    background-repeat: repeat-y;
    font-size: 17px;
}
.vruler span {
    flex: 0 0 200px;
    writing-mode: vertical-rl;
    transform: rotate(180deg);
    line-height: 20px;
    margin-left: 1px;
    width: 20px;
    height: 200px;
    padding-bottom: 12px;
    text-align: right;
}
.canvas {
    position: relative;
    overflow: hidden;
    background: #fff;
}
.vscroll {
    background: #f8f8f8;
    border-left: 2px solid #e2e2e2;
    border-right: 2px solid #aaa;
    padding: 6px 0 0 5px;
}
.vscroll i {
    height: 57px;
}
.hscroll {
    background: #f8f8f8;
    border-top: 2px solid #e6e6e6;
    padding: 6px 0 0 4px;
}
.hscroll i {
    display: block;
    width: 76px;
    height: 16px;
    border-radius: 8px;
    background: #c8c8c8;
}
.scroll-corner {
    background: #fff;
    border-right: 2px solid #aaa;
}

/* ---------- design on the canvas ---------- */
.nav {
    position: absolute;
    left: 0;
    top: 0;
    bottom: 0;
    width: 400px;
    background: #d3c8cd;
    padding: 14px 0 0 14px;
    display: flex;
    flex-direction: column;
    gap: 25.600px;
}
.nav-sel {
    position: absolute;
    left: 0;
    top: 0;
    width: 400px;
    height: 88px;
    background: #df9298;
    border-left: 6px solid #f00;
}
.nav-col {
    position: absolute;
    left: 116px;
    top: 30px;
    width: 170px;
    height: 928px;
    background: rgba(221, 147, 158, 0.3);
}
.nav-row {
    position: relative;
    width: 306px;
    height: 64px;
    flex: none;
    display: flex;
    align-items: center;
    padding-left: 36px;
    background: rgba(171, 222, 163, 0.5);
    color: #71977a;
    fill: #80947a;
    font-family: "Liberation Sans", "Noto Sans CJK SC", sans-serif;
    font-size: 28px;
}
.nav-row.first {
    color: #8f8b68;
    fill: #9c8268;
}
.nic {
    width: 40px;
    height: 40px;
    flex: none;
    margin-right: 26px;
    background: rgba(150, 130, 120, 0.12);
}
.nic.small {
    width: 36px;
    height: 36px;
    margin: 0 28px 0 2px;
}
.ntx {
    height: 32px;
    line-height: 35px;
    white-space: nowrap;
    background: rgba(150, 130, 120, 0.12);
    padding-right: 5px;
}
.ntx.en {
    line-height: 32px;
}
.badge {
    position: absolute;
    left: 288px;
    top: -18px;
    width: 36px;
    height: 36px;
    line-height: 33px;
    text-align: center;
    background: #1b8ad0;
    border: 2px solid #8fd0f0;
    color: #fff;
    font-size: 21px;
}
.panel-sel {
    position: absolute;
    left: 520px;
    top: 104px;
    width: 352px;
    height: 128px;
    background: #edf5f9;
    border: 2px dashed #1ef01e;
}
.hd {
    position: absolute;
    width: 14px;
    height: 14px;
    background: #fff;
    border: 3px solid #000;
}
.tl, .ml, .bl { left: -8px; }
.tc, .bc { left: 167px; }
.tr, .mr, .br { right: -8px; }
.tl, .tc, .tr { top: -8px; }
.ml, .mr { top: 56px; }
.bl, .bc, .br { bottom: -8px; }

/* ---------- inspector ---------- */
.ins-head {
    height: 54px;
    border-bottom: 2px solid #a8a8a8;
}
.ins-head .pactions {
    right: 17px;
}
.ins-name {
    height: 78px;
    flex: none;
    background: #fff;
    border-bottom: 2px solid #aaa;
    padding-left: 18px;
    line-height: 74px;
    font-size: 33px;
    color: #111;
}
.ins-tabs {
    display: flex;
    gap: 2px;
    height: 52px;
    flex: none;
    background: #f0f0f0;
}
.itab {
    flex: 1;
    background: #cecece;
    display: flex;
    align-items: center;
    justify-content: center;
}
.itab:first-child {
    flex: 0 0 170px;
    justify-content: flex-start;
    padding-left: 19px;
}
.itab.on {
    background: #1b8ad0;
    color: #fff;
}
.loc {
    height: 238px;
    flex: none;
    border-bottom: 2px solid #aaa;
    padding: 22px 20px 0 22px;
}
.loc-head {
    display: flex;
    justify-content: space-between;
    align-items: center;
    height: 28px;
    margin-bottom: 32px;
}
.hidden-opt {
    display: flex;
    align-items: center;
    gap: 14px;
    margin-top: 3px;
}
.check {
    width: 28px;
    height: 28px;
    margin-top: -4px;
    background: #fff;
    border: 2px solid #c4c4c4;
    border-radius: 6px;
}
.loc-grid {
    display: grid;
    grid-template-columns: 92px 92px 114px 92px;
    column-gap: 20px;
    row-gap: 10px;
    padding-left: 18px;
}
.fld {
    position: relative;
    text-align: center;
    font-size: 20px;
}
.fld:nth-child(3) {
    margin-left: 22px;
}
.fld span {
    display: block;
    height: 30px;
    line-height: 30px;
}
.num {
    height: 40px;
    background: #fff;
    border: 2px solid #a8a8a8;
    text-align: left;
    padding-left: 5px;
    line-height: 40px;
    font-size: 21.500px;
    position: relative;
}
.fld.off span {
    color: #666;
}
.fld.off .num {
    background: #cecece;
    color: #888;
}
.deg {
    position: absolute;
    right: 5px;
    top: 4px;
    width: 9px;
    height: 9px;
    border: 2px solid #888;
    border-radius: 50%;
}
.ratio {
    position: absolute;
    left: 90px;
    top: 46px;
    width: 24px;
    height: 17px;
    border: 4px solid #555;
    border-top-width: 3px;
    border-bottom-width: 3px;
    clip-path: polygon(0 0, 8px 0, 8px 100%, 0 100%, 0 0, 100% 0, 100% 100%, 16px 100%, 16px 0);
}
.state-name {
    height: 77px;
    flex: none;
    border-bottom: 2px solid #c8c8c8;
    padding-left: 16px;
    line-height: 70px;
    font-size: 36px;
}
.back-color {
    height: 72px;
    flex: none;
    border-bottom: 2px solid #c8c8c8;
    padding: 0 20px 2px 22px;
    display: flex;
    align-items: center;
    justify-content: space-between;
}
.swatch-btn {
    width: 74px;
    height: 40px;
    border: 2px solid #aaa;
    display: flex;
    align-items: center;
    justify-content: space-between;
    padding: 0 6px 0 10px;
}
.swatch {
    width: 24px;
    height: 24px;
    border: 2px solid #666;
    background: #d8d8d8;
}
.back-image {
    height: 266px;
    flex: none;
    padding: 13px 20px 0 22px;
    display: flex;
}
.bi-label {
    width: 182px;
    flex: none;
    line-height: 30px;
    margin-top: 4px;
}
.bi-ctrls {
    flex: 1;
}
.bi-top {
    display: flex;
    gap: 10px;
    align-items: center;
    margin-bottom: 16px;
}
.bi-thumb {
    width: 72px;
    height: 72px;
    background: #fff;
    border: 2px solid #aaa;
}
.bi-btn {
    width: 98px;
    height: 44px;
    border: 2px solid #aaa;
    text-align: center;
    line-height: 40px;
    font-size: 20.500px;
}
.bi-btn.off {
    width: 96px;
    border-color: #ccc;
    color: #888;
}
.bi-aligns {
    display: flex;
    justify-content: space-between;
    margin-bottom: 16px;
}
.al-group {
    display: flex;
    height: 40px;
    border: 2px solid #aaa;
    width: 132px;
}
.al {
    flex: 1;
    display: flex;
    align-items: center;
    justify-content: center;
    border-left: 2px solid #aaa;
}
.al:first-child {
    border-left: none;
}
.al.on {
    margin: -2px 0 -2px -2px;
    flex: 0 0 46px;
    background: #c0e4f5;
    border: 2px solid #1b8ad0;
}
.al-box {
    width: 24px;
    height: 24px;
    border: 2px solid #888;
    display: flex;
    align-items: center;
    justify-content: center;
}
.al-box i {
    width: 12px;
    height: 12px;
    background: #1b8ad0;
}
.al-box.ml { justify-content: flex-start; }
.al-box.mr { justify-content: flex-end; }
.al-box.mt { align-items: flex-start; }
.al-box.mb { align-items: flex-end; }
.bi-select {
    height: 40px;
    border: 2px solid #aaa;
    display: flex;
    align-items: center;
    justify-content: space-between;
    padding: 2px 6px 0 15px;
}

/* ---------- outline ---------- */
.outline {
    flex: 1;
    min-height: 0;
    display: flex;
    flex-direction: column;
}
.o-body {
    flex: 1;
    min-height: 0;
    display: flex;
    overflow: hidden;
}
.o-list {
    width: 481px;
    flex: none;
}
.o-scroll {
    flex: 1;
    background: #f8f8f8;
    border-left: 2px solid #ddd;
    padding: 6px 0 0 5px;
}
.o-scroll i {
    height: 443px;
}
.o-row {
    height: 42px;
    display: flex;
    align-items: center;
    white-space: nowrap;
    padding-bottom: 4px;
}
.o-row.on {
    background: #c0e4f5;
}
.o-row b {
    color: #222;
}
.o-row .pg {
    margin-right: 19px;
}
.o-page {
    padding-left: 12px;
}
.o-top {
    padding-left: 11px;
}
.o-top .dyn {
    margin-left: 13px;
    margin-right: 16px;
}
.o-state {
    padding-left: 82px;
}
.o-sub {
    padding-left: 47px;
}
.o-sub .st {
    margin-left: 17px;
}
.o-leaf {
    padding-left: 40px;
}
.o-deep {
    padding-left: 120px;
}
.o-deep .mst {
    margin-right: 16px;
}
.tri {
    width: 18px;
    height: 15px;
    flex: none;
    background: #777;
    clip-path: polygon(0 0, 100% 0, 50% 100%);
}
.dyn {
    width: 26px;
    height: 22px;
    flex: none;
    margin-top: 4px;
}
.st {
    width: 22px;
    height: 12px;
    flex: none;
    margin-right: 17px;
    margin-top: 4px;
}
.hot, .rect {
    width: 32px;
    height: 8px;
    flex: none;
    margin-right: 12px;
    margin-top: 4px;
}
.hot {
    background: #d3efcf;
}
.rect {
    background: #fff;
    border: 2px solid #555;
}
.flag {
    width: 22px;
    height: 22px;
    margin-left: auto;
    margin-right: 8px;
    margin-top: 8px;
    flex: none;
    border: 3px solid #555;
    background: #f0f0f0;
    display: flex;
    align-items: center;
    justify-content: center;
}
.flag::after {
    content: "";
    width: 10px;
    height: 10px;
    background: #1b8ad0;
}

/* ---------- dialog ---------- */
.dialog {
    position: absolute;
    left: 1040px;
    top: 525px;
    width: 800px;
    height: 751px;
    background: #f0f0f0;
    border: 1px solid #b8b8b8;
    border-radius: 10px;
    box-shadow: 0 30px 80px rgba(0, 0, 0, 0.45);
    font-size: 23.500px;
    display: flex;
    flex-direction: column;
}
.dlg-title {
    position: relative;
    height: 45px;
    flex: none;
    border-bottom: 1px solid #aaa;
    border-radius: 9px 9px 0 0;
    background: linear-gradient(#e8e8e8, #d2d2d2);
    text-align: center;
    line-height: 45px;
    font-size: 25.400px;
    color: #444;
}
.dlg-close {
    position: absolute;
    left: 15px;
    top: 11px;
    width: 24px;
    height: 24px;
    border-radius: 50%;
    background: #fc4a4a;
}
.dlg-name {
    display: flex;
    align-items: center;
    justify-content: space-between;
    margin-top: 18px;
    padding: 0 19px 0 17px;
}
.dlg-input {
    width: 502px;
    height: 38px;
    background: #fff;
    border: 2px solid #aaa;
    padding-left: 5px;
    line-height: 36px;
    font-size: 21.500px;
}
.dlg-states {
    margin: 10px 23px 0 22px;
    padding: 0 14px 14px 13px;
    border: 2px solid #aaa;
    min-width: 0;
}
.dlg-states legend {
    margin-left: -6px;
    padding: 0 8px;
    line-height: 30px;
}
.dlg-tools {
    display: flex;
    gap: 24px;
    height: 26px;
    margin: 23px 0 13px 14px;
    align-items: center;
}
.t-up, .t-down {
    margin-left: 4px;
}
.t-edit {
    margin-left: 2px;
}
.t-edit2 {
    margin-left: -2px;
}
.t-del {
    margin-left: 18px;
}
.dlg-list {
    width: 722px;
    height: 459px;
    background: #fff;
    border: 2px solid #aaa;
}
.dlg-item {
    height: 42px;
    line-height: 40px;
    padding-left: 4px;
    font-size: 22px;
}
.dlg-item.on {
    background: #c0e4f5;
}
.dlg-btns {
    display: flex;
    justify-content: flex-end;
    gap: 27px;
    margin-top: 20px;
    padding-right: 40px;
}
.btn-cancel, .btn-ok {
    width: 166px;
    height: 40px;
    border-radius: 6px;
    text-align: center;
    line-height: 40px;
    font-size: 24px;
}
.btn-cancel {
    background: #fff;
    border: 1px solid #c8c8c8;
    box-shadow: 0 1px 1px rgba(0, 0, 0, 0.2);
    line-height: 38px;
}
.btn-ok {
    background: linear-gradient(#5a90ff, #0a4eff);
    color: #fff;
}
```
